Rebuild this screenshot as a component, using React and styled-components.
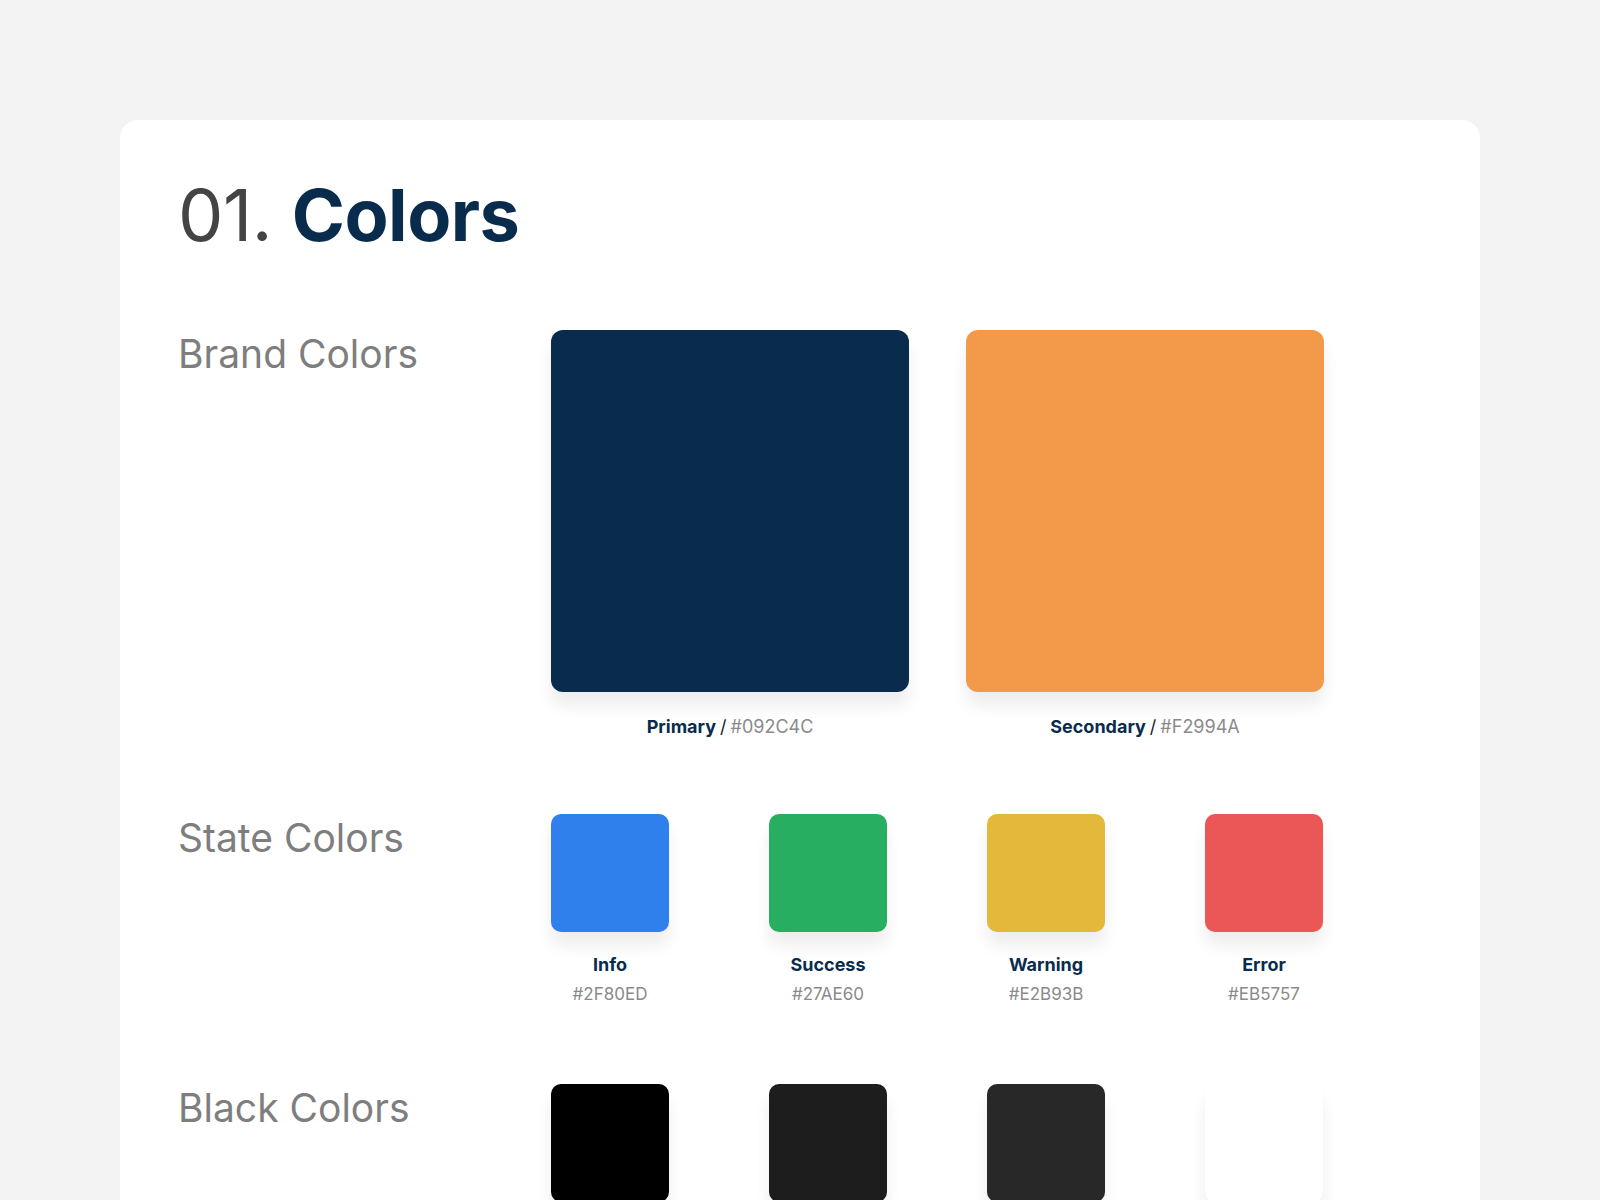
import React from "react";
import styled, { createGlobalStyle } from "styled-components";

const Global = createGlobalStyle`
  html, body { margin: 0; background: #f3f3f3; font-family: Inter, "Noto Sans", sans-serif; }
`;
const Page = styled.div`padding: 120px 120px 0 120px; height: 1200px; box-sizing: border-box; overflow: hidden;`;
const Card = styled.div`background: #fff; border-radius: 18px; padding: 52px 58px 60px; min-height: 1200px;`;
const Title = styled.h1`
  margin: 0 0 72px; font-size: 72px; font-weight: 400; color: #444; letter-spacing: -0.5px; line-height: 1.2;
  b { color: #092c4c; font-weight: 700; }
`;
const Section = styled.div`display: grid; grid-template-columns: 373px 1fr; margin-bottom: ${p => p.$mb}px;`;
const Label = styled.div`font-size: 39px; color: #7e7e7e; line-height: 1; padding-top: 4px;`;
const Grid = styled.div`display: grid; grid-template-columns: repeat(${p => p.$n}, ${p => p.$w}px); column-gap: ${p => p.$gap}px;`;
const Item = styled.div`display: flex; flex-direction: column; align-items: center;`;
const Swatch = styled.div`
  width: ${p => p.$w}px; height: ${p => p.$h}px; border-radius: ${p => p.$r}px; background: ${p => p.$c};
  box-shadow: 0 14px 16px rgba(0,0,0,0.07);
`;
const Caption = styled.div`margin-top: 24px; font-size: 18px; color: #8a8a8a; b { color: #092c4c; font-weight: 700; } span { color: #222; margin: 0 4px; }`;
const Name = styled.div`margin-top: 22px; font-size: 18px; font-weight: 700; color: #092c4c;`;
const Hex = styled.div`margin-top: 9px; font-size: 17px; color: #8a8a8a;`;

const states = [["Info", "#2F80ED"], ["Success", "#27AE60"], ["Warning", "#E2B93B"], ["Error", "#EB5757"]];
const blacks = ["#000000", "#1D1D1D", "#282828", "#FFFFFF"];

export default function App() {
  return (
    <Page>
      <Global />
      <Card>
        <Title>01. <b>Colors</b></Title>
        <Section $mb={77}>
          <Label>Brand Colors</Label>
          <Grid $n={2} $w={358} $gap={57}>
            <Item><Swatch $w={358} $h={362} $r={12} $c="#092C4C" /><Caption><b>Primary</b><span>/</span>#092C4C</Caption></Item>
            <Item><Swatch $w={358} $h={362} $r={12} $c="#F2994A" /><Caption><b>Secondary</b><span>/</span>#F2994A</Caption></Item>
          </Grid>
        </Section>
        <Section $mb={80}>
          <Label>State Colors</Label>
          <Grid $n={4} $w={118} $gap={100}>
            {states.map(([n, c]) => (
              <Item key={n}><Swatch $w={118} $h={118} $r={10} $c={c} /><Name>{n}</Name><Hex>{c}</Hex></Item>
            ))}
          </Grid>
        </Section>
        <Section $mb={0}>
          <Label>Black Colors</Label>
          <Grid $n={4} $w={118} $gap={100}>
            {blacks.map(c => (<Item key={c}><Swatch $w={118} $h={118} $r={10} $c={c} /></Item>))}
          </Grid>
        </Section>
      </Card>
    </Page>
  );
}
